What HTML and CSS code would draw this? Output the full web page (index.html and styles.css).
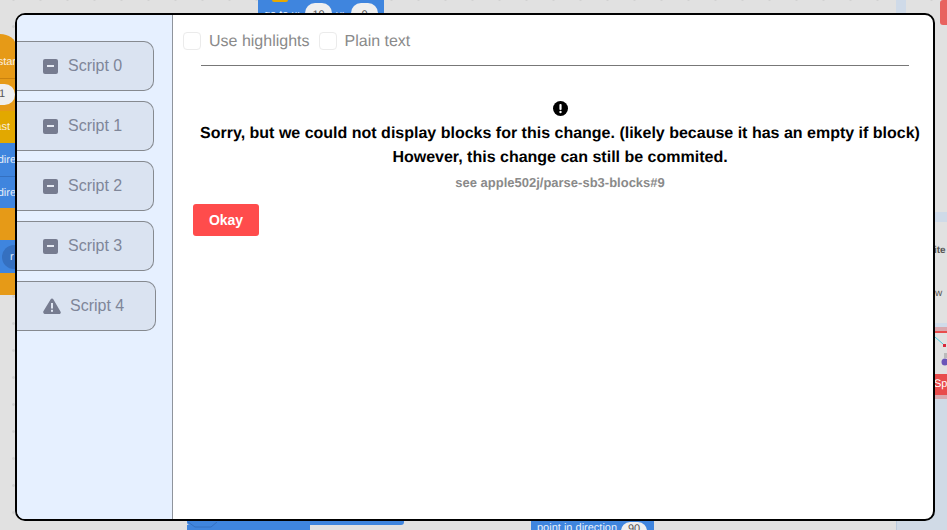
FILE: index.html
```html
<!DOCTYPE html>
<html lang="en">
<head>
<meta charset="utf-8">
<title>Script changes</title>
<link rel="stylesheet" href="styles.css">
</head>
<body>
<div class="backdrop">
  <div class="frag orange-hat"><span class="frag-text star">star</span></div>
  <div class="frag orange-a"></div>
  <div class="frag pill-one">1</div>
  <div class="frag yellow"><span class="frag-text short">ast</span></div>
  <div class="frag blue-a"><span class="frag-text">dire</span></div>
  <div class="frag blue-b"><span class="frag-text">dire</span></div>
  <div class="frag orange-b"></div>
  <div class="frag blue-c"><span class="round">r</span></div>
  <div class="frag orange-c"></div>
  <div class="frag top-block"><span class="top-label">go to x:</span><span class="top-pill one">10</span><span class="top-label y">y:</span><span class="top-pill two">0</span></div>
  <div class="frag top-yellow"></div>
  <div class="frag top-stripe"></div>
  <div class="frag top-red"></div>
  <div class="frag bottom-long"></div>
  <div class="frag bottom-short"></div>
  <svg class="frag bottom-notch" width="30" height="8" viewBox="0 0 30 8"><path d="M1 0 8 5H24L30 0" fill="none" stroke="#3570c0"/></svg>
  <div class="frag bottom-dir"><span class="dir-label">point in direction</span><span class="dir-pill">90</span></div>
  <div class="frag right-lower"></div>
  <div class="frag bottom-stripe"></div>
  <div class="frag right-head"></div>
  <div class="frag right-label ite">ite</div>
  <div class="frag right-label ow">w</div>
  <div class="frag sprite-top"></div>
  <div class="frag sprite-band">Spr</div>
  <div class="frag sprite-under"></div>
  <svg class="frag sprite-art" width="12" height="36" viewBox="0 0 12 36"><path d="M0 0 8 7" stroke="#4cc8dc" fill="none"/><rect x="8" y="7" width="3" height="3" fill="#d8283c"/><circle cx="10" cy="25" r="3.5" fill="#6a54b8"/><rect x="9" y="16" width="3" height="5" fill="#bbb"/></svg>
</div>

<div class="modal">
  <aside class="sidebar">
    <button class="script"><span class="minus"><span class="bar"></span></span>Script 0</button>
    <button class="script"><span class="minus"><span class="bar"></span></span>Script 1</button>
    <button class="script"><span class="minus"><span class="bar"></span></span>Script 2</button>
    <button class="script"><span class="minus"><span class="bar"></span></span>Script 3</button>
    <button class="script warn">
      <svg class="warn-icon" width="18" height="16" viewBox="0 0 18 16"><path d="M9 .5c.6 0 1 .3 1.300.8l7.300 12.400c.6 1-.1 2.300-1.300 2.300H1.700C.5 15.500-.2 14.200.4 13.200L7.700 1.300C8 .8 8.400 .5 9 .5Z" fill="#767c90"/><rect x="8" y="5" width="2" height="5.500" fill="#e0e7f3"/><rect x="8" y="11.800" width="2" height="2" fill="#e0e7f3"/></svg>
      Script 4
    </button>
  </aside>
  <main class="content">
    <div class="options">
      <label class="option"><span class="check"></span><span class="option-text">Use highlights</span></label>
      <label class="option"><span class="check"></span><span class="option-text">Plain text</span></label>
    </div>
    <hr class="rule">
    <div class="message">
      <svg class="alert" width="15" height="15" viewBox="0 0 15 15"><circle cx="7.500" cy="7.500" r="7.500" fill="#000"/><rect x="6.400" y="3" width="2.200" height="6" rx="1" fill="#fff"/><circle cx="7.500" cy="11" r="1.200" fill="#fff"/></svg>
      <p class="line first">Sorry, but we could not display blocks for this change. (likely because it has an empty if block)</p>
      <p class="line">However, this change can still be commited.</p>
      <p class="see">see apple502j/parse-sb3-blocks#9</p>
    </div>
    <button class="okay">Okay</button>
  </main>
</div>
</body>
</html>
```
FILE: styles.css
```css
html, body {
  margin: 0;
  height: 100%;
  overflow: hidden;
}
body {
  position: relative;
  background: #e1e1e1;
  font-family: "Liberation Sans", Arial, sans-serif;
  text-rendering: geometricPrecision;
}
.backdrop {
  position: absolute;
  inset: 0;
  overflow: hidden;
  background-image: radial-gradient(circle, #d2d2d2 1.2px, transparent 1.6px);
  background-size: 27px 27px;
  background-position: 0 -14px;
}
.frag {
  position: absolute;
  box-sizing: border-box;
}
.frag-text {
  position: absolute;
  right: 0;
  top: 50%;
  transform: translateY(-50%);
  font-size: 11px;
  color: #fff;
  white-space: nowrap;
  opacity: .85;
}
.frag-text.short { right: 6px; }
.orange-hat { left: 0; top: 34px; width: 16px; height: 44px; background: #e69a17; border-top-right-radius: 16px 12px; }
.orange-hat .star { right: 0; top: 28px; }
.orange-a { left: 0; top: 78px; width: 16px; height: 33px; background: #e69a17; border-top: 1px solid #c9820f; }
.pill-one { left: -12px; top: 84px; width: 27px; height: 21px; border-radius: 11px; background: #efefef; color: #555; font-size: 11px; line-height: 21px; text-align: right; padding-right: 10px; }
.yellow { left: 0; top: 111px; width: 16px; height: 32px; background: #e2a800; }
.blue-a { left: 0; top: 143px; width: 16px; height: 33px; background: #3f85de; }
.blue-b { left: 0; top: 176px; width: 16px; height: 32px; background: #3f85de; border-top: 1px solid #3470c0; }
.orange-b { left: 0; top: 208px; width: 16px; height: 32px; background: #e69a17; }
.blue-c { left: 0; top: 240px; width: 16px; height: 33px; background: #3f85de; }
.round { position: absolute; left: 2px; top: 5px; width: 24px; height: 24px; border-radius: 12px; background: #3570c0; color: #dfe9f7; font-size: 11px; line-height: 24px; padding-left: 8px; box-sizing: border-box; }
.orange-c { left: 0; top: 273px; width: 16px; height: 22px; background: #e69a17; }
.top-block { left: 258px; top: 0; width: 126px; height: 16px; background: #3f85de; }
.top-label { position: absolute; left: 6px; top: 9px; font-size: 11px; color: #fff; white-space: nowrap; }
.top-label.y { left: 78px; }
.top-pill { position: absolute; top: 3px; width: 27px; height: 20px; border-radius: 10px; background: #efefef; color: #555; font-size: 11px; line-height: 24px; text-align: center; }
.top-pill.one { left: 47px; }
.top-pill.two { left: 93px; }
.top-yellow { left: 272px; top: 0; width: 16px; height: 2px; background: #e6a800; border-radius: 0 0 3px 3px; }
.top-stripe { left: 896px; top: 0; width: 10px; height: 14px; background: #cfdae8; }
.top-red { left: 940px; top: 0; width: 7px; height: 25px; background: #e8625f; border-radius: 3px 0 0 3px; }
.bottom-long { left: 187px; top: 520px; width: 217px; height: 5px; background: #3f85de; border-radius: 0 0 3px 3px; }
.bottom-short { left: 187px; top: 525px; width: 123px; height: 5px; background: #3f85de; }
.bottom-notch { left: 187px; top: 522px; }
.bottom-dir { left: 531px; top: 520px; width: 123px; height: 10px; background: #3f85de; overflow: hidden; }
.dir-label { position: absolute; left: 6px; top: 2px; font-size: 11px; color: #e9f1fb; white-space: nowrap; }
.dir-pill { position: absolute; left: 90px; top: 2px; width: 26px; height: 18px; border-radius: 9px; background: #efefef; color: #555; font-size: 11px; text-align: center; line-height: 14px; }
.right-lower { left: 905px; top: 399px; width: 42px; height: 131px; background: #d0dae6; border-left: 1px solid #bccbdd; }
.bottom-stripe { left: 896px; top: 519px; width: 10px; height: 11px; background: #d0dae6; border-left: 1px solid #bccbdd; }
.right-head { left: 934px; top: 212px; width: 13px; height: 10px; background: #cfdae8; }
.right-label { left: 934px; font-size: 10px; color: #555; white-space: nowrap; line-height: 12px; }
.right-label.ite { top: 245px; font-weight: bold; }
.right-label.ow { top: 288px; left: 935px; }
.sprite-top { left: 934px; top: 323px; width: 13px; height: 10px; background: #d9a8ae; border-bottom: 2px solid #e84c4c; border-top: 4px solid #d0dbe9; }
.sprite-art { left: 935px; top: 337px; }
.sprite-band { left: 934px; top: 374px; width: 13px; height: 21px; background: #e84c4c; color: #fff; font-size: 11px; line-height: 20px; overflow: hidden; white-space: nowrap; }
.sprite-under { left: 934px; top: 395px; width: 13px; height: 4px; background: #d9a8ae; }

.modal {
  position: absolute;
  left: 15px;
  top: 13px;
  width: 920px;
  height: 508px;
  box-sizing: border-box;
  display: flex;
  background: #fff;
  border: 2px solid #000;
  border-radius: 10px;
  overflow: hidden;
}
.sidebar {
  flex: none;
  box-sizing: border-box;
  width: 156px;
  padding-top: 26px;
  display: flex;
  flex-direction: column;
  align-items: flex-start;
  gap: 10px;
  background: #e6f0ff;
  border-right: 1px solid #8f949c;
}
.script {
  box-sizing: border-box;
  display: flex;
  align-items: center;
  width: 137px;
  height: 50px;
  padding: 0 0 0 26px;
  background: #dae3f1;
  border: 1px solid #868a90;
  border-left: 0;
  border-radius: 0 10px 10px 0;
  color: #7f8699;
  font: 16px "Liberation Sans", Arial, sans-serif;
}
.script.warn {
  width: 139px;
}
.minus {
  flex: none;
  display: flex;
  align-items: center;
  justify-content: center;
  width: 15px;
  height: 15px;
  margin-right: 10px;
  border-radius: 2px;
  background: #767c90;
}
.bar {
  width: 7px;
  height: 2px;
  background: #e6ebf4;
}
.warn-icon {
  flex: none;
  margin-right: 9px;
}
.content {
  flex: 1;
  min-width: 0;
  box-sizing: border-box;
  padding-left: 10px;
}
.options {
  display: flex;
  gap: 9px;
  height: 18px;
  margin-top: 17px;
}
.option {
  display: flex;
  align-items: center;
  gap: 8px;
  font-size: 16px;
  color: #8a8a8a;
}
.option-text {
  padding-top: 2px;
}
.check {
  flex: none;
  box-sizing: border-box;
  width: 18px;
  height: 18px;
  border: 1px solid #ebebeb;
  border-radius: 4px;
  background: #fff;
}
.rule {
  margin: 15px 24px 0 18px;
  border: 0;
  border-top: 1px solid #777;
}
.message {
  margin: 35px 0 0 4px;
  text-align: center;
}
.alert {
  display: block;
  margin: 0 auto;
}
.line {
  margin: 0;
  font-size: 16px;
  font-weight: bold;
  line-height: 24px;
  color: #000;
  white-space: nowrap;
}
.line.first {
  margin-top: 6px;
}
.see {
  margin: 3px 0 0;
  font-size: 13px;
  font-weight: bold;
  line-height: 20px;
  color: #8a8a8a;
}
.okay {
  display: block;
  box-sizing: border-box;
  width: 66px;
  height: 32px;
  margin: 11px 0 0 10px;
  padding: 0;
  border: 0;
  border-radius: 3px;
  background: #ff4c4c;
  color: #fff;
  font: bold 14px "Liberation Sans", Arial, sans-serif;
}
```
